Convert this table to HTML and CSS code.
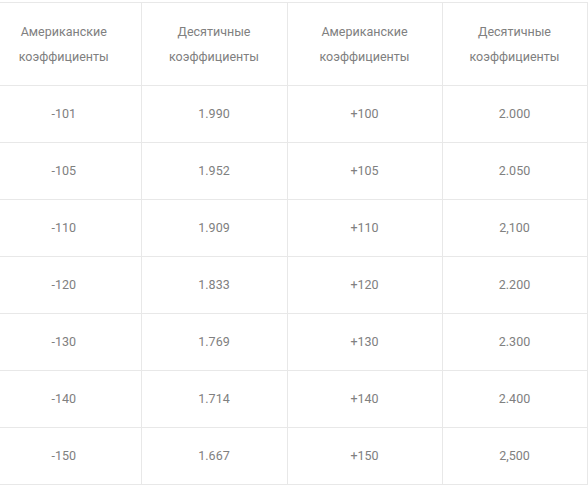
FILE: index.html
```html
<!DOCTYPE html>
<html lang="ru">
<head>
<meta charset="utf-8">
<link rel="stylesheet" href="styles.css">
</head>
<body>
<div class="wrap">
<table class="odds">
  <colgroup>
    <col class="c1"><col class="c2"><col class="c3"><col class="c4">
  </colgroup>
  <thead>
    <tr>
      <th>Американские<br>коэффициенты</th>
      <th>Десятичные<br>коэффициенты</th>
      <th>Американские<br>коэффициенты</th>
      <th>Десятичные<br>коэффициенты</th>
    </tr>
  </thead>
  <tbody>
    <tr><td>-101</td><td>1.990</td><td>+100</td><td>2.000</td></tr>
    <tr><td>-105</td><td>1.952</td><td>+105</td><td>2.050</td></tr>
    <tr><td>-110</td><td>1.909</td><td>+110</td><td>2,100</td></tr>
    <tr><td>-120</td><td>1.833</td><td>+120</td><td>2.200</td></tr>
    <tr><td>-130</td><td>1.769</td><td>+130</td><td>2.300</td></tr>
    <tr><td>-140</td><td>1.714</td><td>+140</td><td>2.400</td></tr>
    <tr><td>-150</td><td>1.667</td><td>+150</td><td>2,500</td></tr>
  </tbody>
</table>
</div>
</body>
</html>
```
FILE: styles.css
```css
html, body {
  margin: 0;
  padding: 0;
  background: #ffffff;
  overflow: hidden;
}

.wrap {
  padding-top: 2px;
  margin-left: -13px;
}

.odds {
  border-collapse: collapse;
  table-layout: fixed;
  width: 600px;
  font-family: Roboto, "Noto Sans", sans-serif;
  font-size: 12.5px;
  color: #808080;
}

.c1 { width: 154px; }
.c2 { width: 146px; }
.c3 { width: 155px; }
.c4 { width: 145px; }

.odds th,
.odds td {
  border: 1px solid #e8e8e8;
  text-align: center;
  vertical-align: middle;
  padding: 0;
}

.odds th:first-child,
.odds td:first-child {
  border-left: none;
}

.odds th {
  font-weight: 400;
  height: 82px;
  line-height: 25px;
}

.odds td {
  height: 56px;
  line-height: 20px;
}
```
